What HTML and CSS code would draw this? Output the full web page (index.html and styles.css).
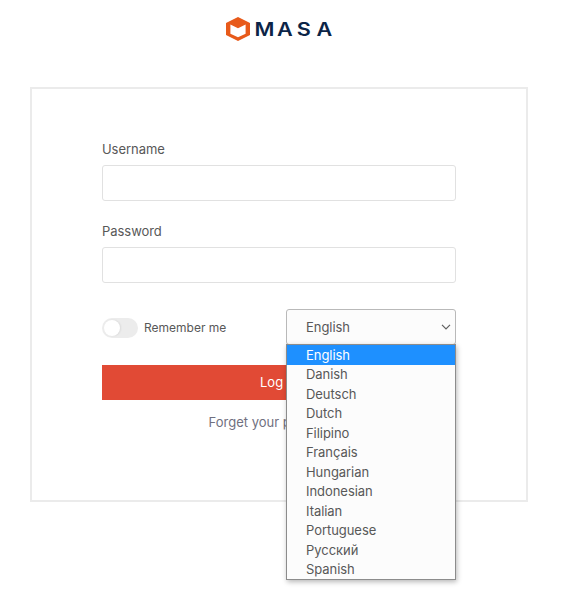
FILE: index.html
```html
<!DOCTYPE html>
<html lang="en">
<head>
<meta charset="utf-8">
<title>Masa Login</title>
<link rel="stylesheet" href="styles.css">
</head>
<body>
<header class="brand">
  <svg class="logo" viewBox="0 0 108 26" width="108" height="26" role="img" aria-label="Masa">
    <path fill="#e85a1a" d="M13 1 25 7V19L13 25 1 19V7Z"/>
    <path fill="#fff" d="M5.4 8.6 13 12.3 20.6 8.6V17.7L13 21.2 5.4 17.7Z"/>
    <text class="wordmark" transform="scale(1.2 1)" y="20" x="24.6 43.4 59.7 76.2">MASA</text>
  </svg>
</header>
<main class="card">
  <form class="login">
    <label class="label" for="user">Username</label>
    <input class="field" id="user" type="text">
    <label class="label" for="pass">Password</label>
    <input class="field" id="pass" type="password">
    <div class="options">
      <div class="remember"><span class="switch"></span><span>Remember me</span></div>
      <div class="language">
        <div class="select">English
          <svg class="chevron" width="10" height="6" viewBox="0 0 10 6"><path d="M1 .8 5 4.8 9 .8" fill="none" stroke="#606060" stroke-width="1.2"/></svg>
        </div>
        <ul class="menu">
          <li class="active">English</li><li>Danish</li><li>Deutsch</li><li>Dutch</li><li>Filipino</li><li>Français</li><li>Hungarian</li><li>Indonesian</li><li>Italian</li><li>Portuguese</li><li>Русский</li><li>Spanish</li>
        </ul>
      </div>
    </div>
    <button class="submit" type="button">Log In</button>
    <a class="forgot">Forget your password?</a>
  </form>
</main>
</body>
</html>
```
FILE: styles.css
```css
* { box-sizing: border-box; }
body {
  margin: 0;
  height: 611px;
  overflow: hidden;
  background: #fff;
  color: #585858;
  font: 400 13px/20px Inter, "Noto Sans", sans-serif;
}
.brand {
  height: 87px;
  padding: 16px 0 0 225px;
}
.logo { display: block; }
.wordmark {
  font: 600 18px Inter, sans-serif;
  fill: #0b2447;
}
.card {
  width: 498px;
  height: 415px;
  margin-left: 30px;
  padding: 50px 70px 0;
  border: 2px solid #ebebeb;
}
.login {
  display: flex;
  flex-direction: column;
}
.label {
  height: 20px;
  margin-bottom: 6px;
  letter-spacing: -.05px;
}
.field {
  height: 36px;
  margin: 0 0 20px;
  border: 1px solid #e1e1e1;
  border-radius: 3px;
  background: #fff;
}
.options {
  display: flex;
  justify-content: space-between;
  align-items: center;
  height: 36px;
  margin: 6px 0 20px;
}
.remember {
  display: flex;
  align-items: center;
  gap: 6px;
  padding-top: 1px;
  font-size: 12px;
}
.switch {
  width: 36px;
  height: 20px;
  padding: 2px;
  border-radius: 10px;
  background: #ececec;
}
.switch::before {
  content: "";
  display: block;
  width: 16px;
  height: 16px;
  border-radius: 50%;
  background: #fff;
  box-shadow: 1px 0 2px rgba(0, 0, 0, .08);
}
.language {
  position: relative;
  width: 170px;
  letter-spacing: -.05px;
}
.select {
  display: flex;
  align-items: center;
  justify-content: space-between;
  height: 36px;
  padding: 0 4px 0 19px;
  border: 1px solid #b9b9b9;
  border-radius: 3px;
  background: #fcfcfc;
}
.menu {
  position: absolute;
  top: 35px;
  left: 0;
  width: 170px;
  height: 236px;
  margin: 0;
  padding: 0;
  list-style: none;
  border: 1px solid #8c8c8c;
  background: #fcfcfc;
  box-shadow: 1px 2px 5px rgba(0, 0, 0, .28);
}
.menu li {
  height: 19.5px;
  padding: .5px 0 0 19px;
  line-height: 19.5px;
}
.menu .active {
  background: #1e90ff;
  color: #fff;
}
.submit {
  height: 35px;
  padding: 0 0 1px;
  border: 0;
  background: #e14a35;
  color: #fff;
  font: inherit;
}
.forgot {
  margin-top: 12px;
  text-align: center;
  color: #707080;
}
```
